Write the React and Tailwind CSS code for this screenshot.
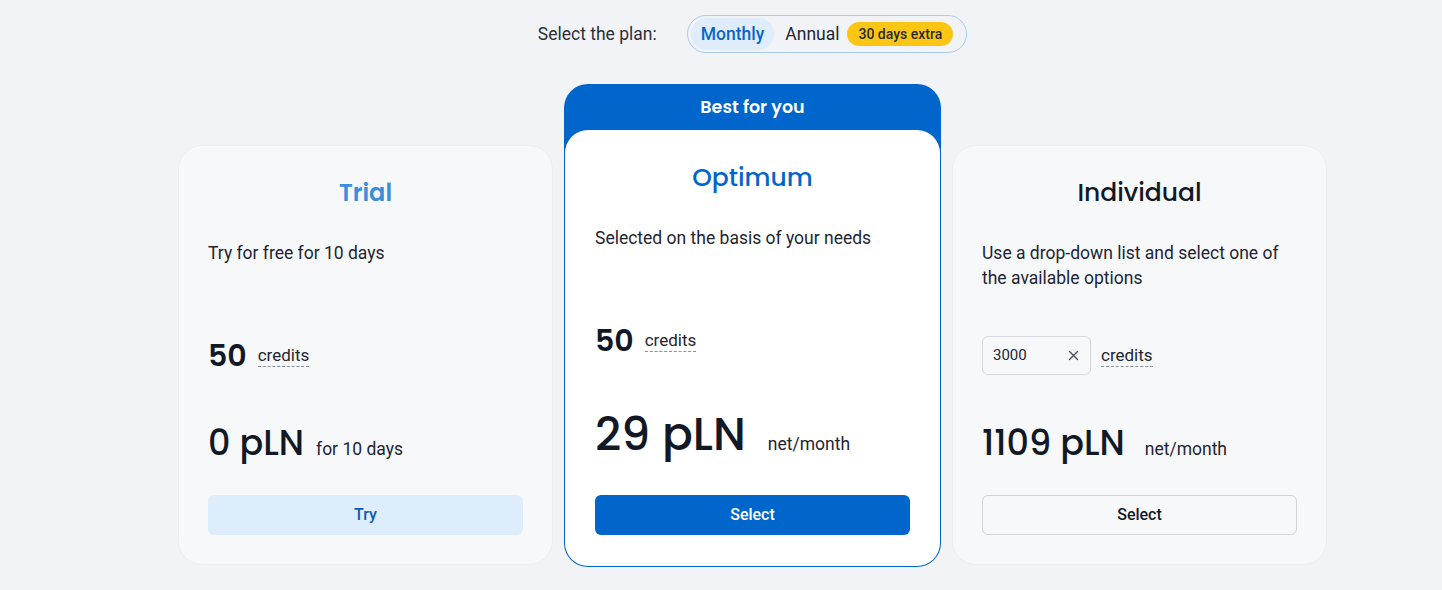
const heading = "font-['Poppins','Inter','Noto_Sans',sans-serif]"

function Credits() {
  return (
    <span className="border-b border-dashed border-[#8a909c] text-[17px] leading-[22px] text-[#1e2533]">credits</span>
  )
}

function Toggle() {
  return (
    <div className="flex items-center justify-center gap-[30px] pt-[15px]">
      <span className="text-[17.5px] text-[#2b303a]">Select the plan:</span>
      <div className="flex h-[38px] items-center rounded-full border border-[#a9ccf3] bg-[#f2f3f7] pl-[3px] pr-[13px]">
        <span className="flex h-[32px] items-center rounded-full bg-[#deecfc] px-[10px] text-[17.5px] font-medium text-[#0b66c3]">Monthly</span>
        <span className="ml-[11px] text-[17.5px] text-[#1e2533]">Annual</span>
        <span className="ml-[8px] flex h-[24px] items-center rounded-full bg-[#fbc514] px-[11px] text-[14px] font-medium text-[#2a2a2a]">30 days extra</span>
      </div>
    </div>
  )
}

function SideCard({ children }) {
  return (
    <div className="mt-[61px] flex h-[420px] w-[375px] flex-col rounded-[24px] border border-[#eceef2] bg-[#f7f8fa] px-[29px] pt-[29px] pb-[29px]">
      {children}
    </div>
  )
}

export default function App() {
  return (
    <div className="min-h-screen bg-[#f2f3f7] pl-[63px] font-['Roboto',sans-serif] text-[#1e2533]">
      <Toggle />
      <div className="mt-[31px] flex items-start justify-center gap-[11px]">
        <SideCard>
          <h2 className={`${heading} h-[36px] text-center text-[24px] leading-[36px] font-semibold text-[#3b8de0]`}>Trial</h2>
          <p className="mt-[30px] h-[50px] text-[17.5px] leading-[25px]">Try for free for 10 days</p>
          <div className="mt-[44px] flex h-[40px] items-center gap-[11px]">
            <span className={`${heading} text-[30px] font-semibold text-[#121826]`}>50</span>
            <Credits />
          </div>
          <div className="mt-[44px] flex h-[48px] items-baseline">
            <span className={`${heading} text-[35px] leading-[48px] font-medium text-[#121826]`}>0 pLN</span>
            <span className="ml-[12px] text-[17.5px] text-[#1e2533]">for 10 days</span>
          </div>
          <button className="mt-[28px] h-[40px] w-full rounded-[6px] bg-[#ddedfc] text-[16px] font-medium text-[#0a5cb8]">Try</button>
        </SideCard>

        <div className="w-[377px] rounded-[24px] bg-[#0066cc] p-px">
          <div className={`${heading} flex h-[45px] items-center justify-center text-[17.5px] font-semibold text-white`}>Best for you</div>
          <div className="flex h-[436px] flex-col rounded-[23px] bg-white px-[30px] pt-[30px] pb-[30px]">
            <h2 className={`${heading} h-[36px] text-center text-[25px] leading-[36px] font-medium text-[#0066cc]`}>Optimum</h2>
            <p className="mt-[30px] h-[50px] text-[17.5px] leading-[25px]">Selected on the basis of your needs</p>
            <div className="mt-[44px] flex h-[40px] items-center gap-[11px]">
              <span className={`${heading} text-[30px] font-semibold text-[#121826]`}>50</span>
              <Credits />
            </div>
            <div className="mt-[44px] flex h-[60px] items-baseline">
              <span className={`${heading} text-[45.5px] leading-[60px] font-medium text-[#121826]`}>29 pLN</span>
              <span className="ml-[22px] text-[17.5px] text-[#1e2533]">net/month</span>
            </div>
            <button className="mt-[31px] h-[40px] w-full rounded-[6px] bg-[#0066cc] text-[16px] font-medium text-white">Select</button>
          </div>
        </div>

        <SideCard>
          <h2 className={`${heading} h-[36px] text-center text-[25px] leading-[36px] font-medium text-[#121826]`}>Individual</h2>
          <p className="mt-[30px] h-[50px] text-[17.5px] leading-[25px]">Use a drop-down list and select one of the available options</p>
          <div className="mt-[44px] flex h-[40px] items-center gap-[10px]">
            <div className="flex h-[39px] w-[109px] items-center justify-between rounded-[6px] border border-[#d6d9de] bg-[#f7f8fa] pl-[10px] pr-[11px]">
              <span className="text-[15px] text-[#1e2533]">3000</span>
              <svg width="11" height="11" viewBox="0 0 11 11" fill="none" stroke="#4a505c" strokeWidth="1.4" strokeLinecap="round">
                <path d="M1.5 1.5l8 8M9.5 1.5l-8 8" />
              </svg>
            </div>
            <Credits />
          </div>
          <div className="mt-[44px] flex h-[48px] items-baseline">
            <span className={`${heading} text-[35px] leading-[48px] font-medium text-[#121826]`}>1109 pLN</span>
            <span className="ml-[20px] text-[17.5px] text-[#1e2533]">net/month</span>
          </div>
          <button className="mt-[28px] h-[40px] w-full rounded-[6px] border border-[#d0d3d8] bg-[#f7f8fa] text-[16px] font-medium text-[#121826]">Select</button>
        </SideCard>
      </div>
    </div>
  )
}
